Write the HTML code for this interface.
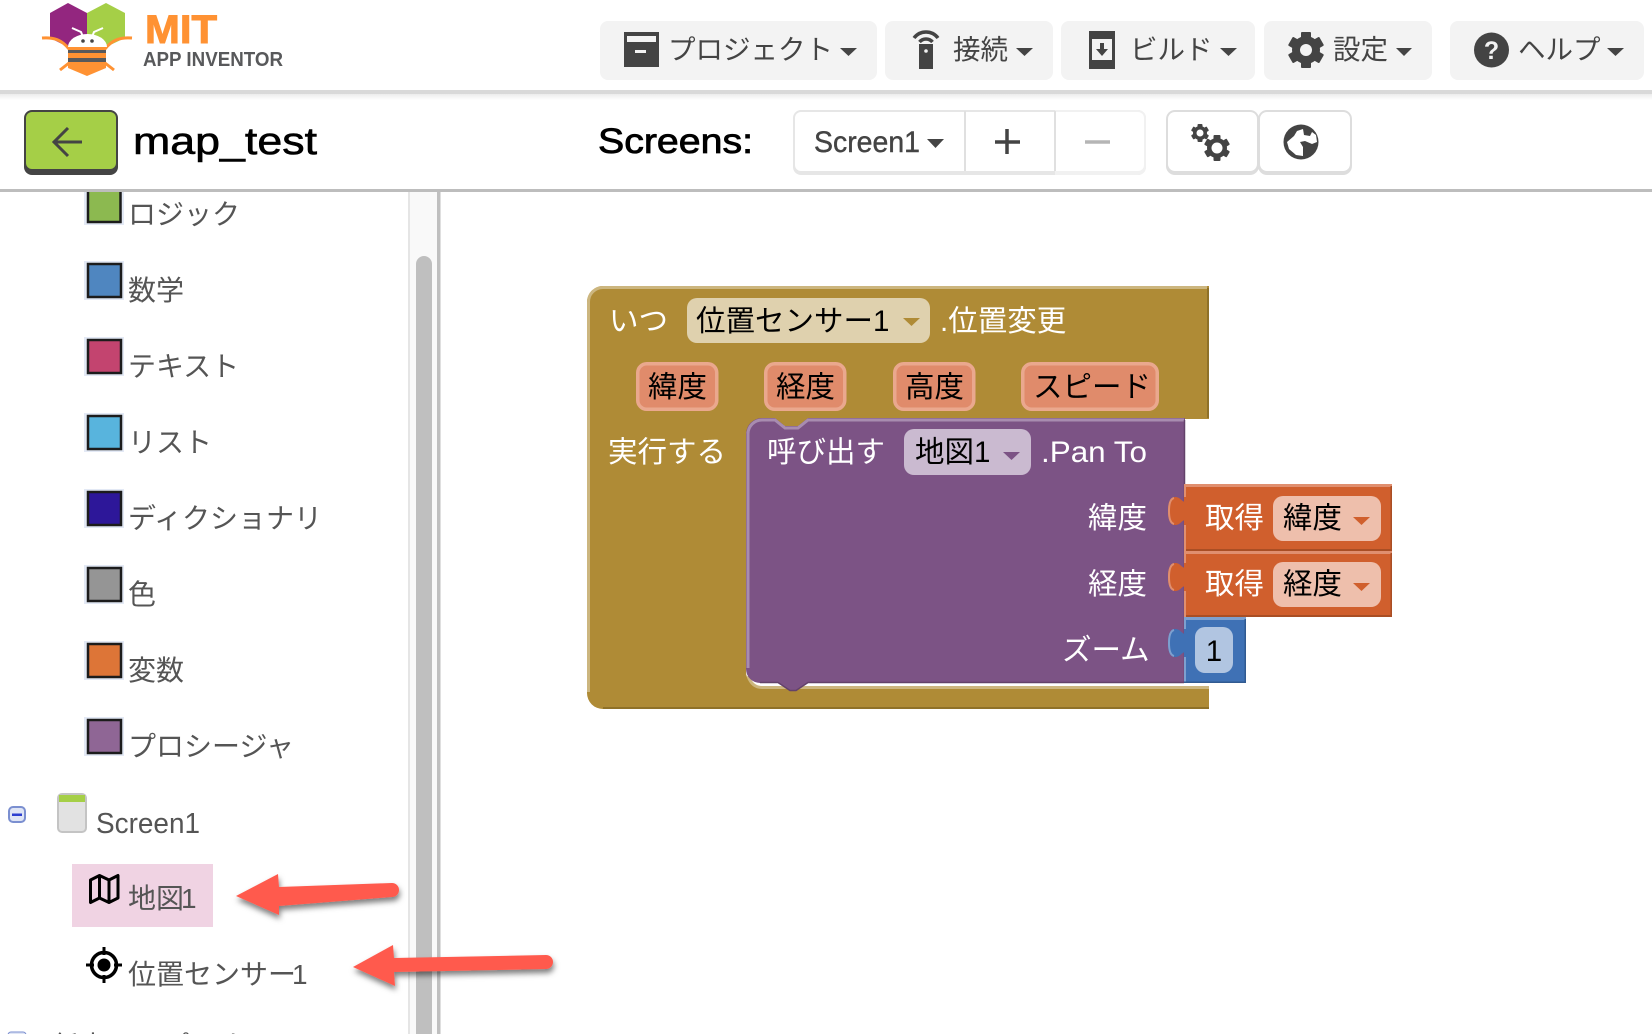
<!DOCTYPE html>
<html lang="ja">
<head>
<meta charset="utf-8">
<title>MIT App Inventor</title>
<style>
html,body{margin:0;padding:0;background:#fff;width:1652px;height:1034px;overflow:hidden}
svg{display:block;font-family:"Liberation Sans","Noto Sans CJK JP",sans-serif}
.m{font-size:27.5px;fill:#444}
.s{font-size:28px;fill:#555}
.w{font-size:29.5px;fill:#fff}
.k{font-size:29.5px;fill:#000}
</style>
</head>
<body>
<svg width="1652" height="1034" viewBox="0 0 1652 1034" xmlns="http://www.w3.org/2000/svg">
<defs>
<linearGradient id="fade" x1="0" y1="0" x2="0" y2="1"><stop offset="0" stop-color="#ececec"/><stop offset="1" stop-color="#fff"/></linearGradient>
<filter id="sh" x="-20%" y="-40%" width="140%" height="190%"><feDropShadow dx="1" dy="4" stdDeviation="3" flood-color="#000" flood-opacity=".5"/></filter>
<g id="tab"><path d="M18 5C13 5 13 0 7 0C2 0 0 6 0 14C0 22 2 28 7 28C13 28 13 23 18 23Z"/></g>
</defs>

<!-- header -->
<rect x="0" y="90" width="1652" height="4" fill="#d9d9d9"/>
<rect x="0" y="94" width="1652" height="6" fill="url(#fade)"/>

<!-- logo -->
<path d="M50 13L68 3L87 13V47H68L50 38Z" fill="#93267f"/>
<path d="M87 13L106 3L125 13V38L106 47H87Z" fill="#a5cf47"/>
<path d="M42 38C54 37 62 40 69 49" fill="none" stroke="#ff9233" stroke-width="3"/>
<path d="M132 38C120 37 112 40 105 49" fill="none" stroke="#ff9233" stroke-width="3"/>
<path d="M72 28L81 32L83 37M103 28L94 32L92 37" fill="none" stroke="#fff" stroke-width="2"/>
<path d="M68 47A19.500 13 0 0 1 107 47Z" fill="#fff"/>
<circle cx="83" cy="41" r="1.800" fill="#444"/><circle cx="92" cy="41" r="1.800" fill="#444"/>
<rect x="68" y="47" width="38" height="3.500" fill="#ff9233"/>
<rect x="68" y="50" width="38" height="3" fill="#58595b"/>
<rect x="68" y="53" width="38" height="5" fill="#ff9233"/>
<rect x="68" y="58" width="38" height="4" fill="#58595b"/>
<path d="M68 62H106V68L87 76L68 68Z" fill="#ff9233"/>
<path d="M69 63L60 70M105 63L114 70" stroke="#ff9233" stroke-width="3"/>
<text x="145" y="43" font-size="40" font-weight="700" fill="#ff9233" stroke="#ff9233" stroke-width="1" textLength="72" lengthAdjust="spacingAndGlyphs">MIT</text>
<text x="143" y="66" font-size="20" font-weight="700" fill="#58595b" textLength="140" lengthAdjust="spacingAndGlyphs">APP INVENTOR</text>

<!-- menu buttons -->
<g fill="#f3f3f3">
<rect x="600" y="21" width="277" height="59" rx="8"/>
<rect x="885" y="21" width="168" height="59" rx="8"/>
<rect x="1061" y="21" width="194" height="59" rx="8"/>
<rect x="1264" y="21" width="168" height="59" rx="8"/>
<rect x="1450" y="21" width="194" height="59" rx="8"/>
</g>
<!-- project icon -->
<rect x="624" y="32" width="35" height="35" fill="#444"/>
<rect x="627" y="36" width="29" height="6" fill="#f3f3f3"/>
<rect x="635" y="50" width="11" height="3" fill="#f3f3f3"/>
<text class="m" x="668" y="59">プロジェクト</text>
<path d="M840 48H857L848.500 56Z" fill="#444"/>
<!-- connect icon -->
<path d="M914 38A15 15 0 0 1 938 38" fill="none" stroke="#444" stroke-width="3.500"/>
<path d="M919.500 42A8.500 8.500 0 0 1 932.500 42" fill="none" stroke="#444" stroke-width="3.500"/>
<rect x="919" y="44" width="14" height="25" fill="#444"/>
<circle cx="926" cy="51" r="1.800" fill="#f3f3f3"/>
<text class="m" x="953" y="59">接続</text>
<path d="M1016 48H1033L1024.500 56Z" fill="#444"/>
<!-- build icon -->
<rect x="1089" y="31" width="26" height="38" fill="#444"/>
<rect x="1092" y="39" width="20" height="21" fill="#f3f3f3"/>
<path d="M1100 43H1104V49H1108L1102 56L1096 49H1100Z" fill="#444"/>
<text class="m" x="1130" y="59">ビルド</text>
<path d="M1220 48H1237L1228.500 56Z" fill="#444"/>
<!-- settings gear -->
<g transform="translate(1306 50)" fill="#444">
<circle r="14"/>
<rect x="-5" y="-18" width="10" height="36" rx="1"/>
<rect x="-5" y="-18" width="10" height="36" rx="1" transform="rotate(60)"/>
<rect x="-5" y="-18" width="10" height="36" rx="1" transform="rotate(120)"/>
<circle r="6" fill="#f3f3f3"/>
</g>
<text class="m" x="1333" y="59">設定</text>
<path d="M1396 48H1412L1404 56Z" fill="#444"/>
<!-- help -->
<circle cx="1491.500" cy="50" r="17.500" fill="#444"/>
<text x="1491.500" y="59" font-size="25" font-weight="700" fill="#f3f3f3" text-anchor="middle">?</text>
<text class="m" x="1518" y="59">ヘルプ</text>
<path d="M1607 48H1624L1615.500 56Z" fill="#444"/>

<!-- second bar -->
<rect x="24" y="110" width="94" height="65" rx="8" fill="#444"/>
<rect x="26" y="112" width="90" height="57" rx="6" fill="#a5cf47"/>
<path d="M82 142H54M68 128L54 142L68 156" fill="none" stroke="#444" stroke-width="3"/>
<text x="133" y="154" font-size="38" fill="#000" textLength="184" lengthAdjust="spacingAndGlyphs" style="stroke:#000;stroke-width:.6px">map_test</text>
<text x="598" y="153" font-size="35" fill="#000" textLength="155" lengthAdjust="spacingAndGlyphs" style="stroke:#000;stroke-width:.8px">Screens:</text>

<!-- screens group -->
<rect x="793" y="110" width="353" height="65" rx="8" fill="#e6e6e6"/>
<path d="M1055 110H1138a8 8 0 0 1 8 8V167a8 8 0 0 1-8 8H1055Z" fill="#f1f1f1"/>
<rect x="795" y="112" width="349" height="59" rx="6" fill="#fff"/>
<rect x="964" y="111" width="2" height="60" fill="#e0e0e0"/>
<rect x="1054" y="111" width="2" height="60" fill="#e0e0e0"/>
<text x="814" y="152" font-size="30" fill="#444" stroke="#444" stroke-width=".4" textLength="106" lengthAdjust="spacingAndGlyphs">Screen1</text>
<path d="M927 139H944L935.500 148Z" fill="#444"/>
<path d="M1007 129V154M995 142H1020" stroke="#444" stroke-width="3.500"/>
<path d="M1085 142H1110" stroke="#b5b5b5" stroke-width="3.500"/>

<rect x="1166" y="110" width="93" height="65" rx="9" fill="#ddd"/>
<rect x="1168" y="112" width="89" height="59" rx="7" fill="#fff"/>
<rect x="1258" y="110" width="94" height="65" rx="9" fill="#ddd"/>
<rect x="1260" y="112" width="90" height="59" rx="7" fill="#fff"/>
<g fill="#444">
<g transform="translate(1217 148)">
<circle r="10"/><rect x="-3.500" y="-13" width="7" height="26" rx="1"/><rect x="-3.500" y="-13" width="7" height="26" rx="1" transform="rotate(60)"/><rect x="-3.500" y="-13" width="7" height="26" rx="1" transform="rotate(120)"/><circle r="5.500" fill="#fff"/>
</g>
<g transform="translate(1200 133)">
<circle r="7"/><rect x="-2.500" y="-9" width="5" height="18" rx="1"/><rect x="-2.500" y="-9" width="5" height="18" rx="1" transform="rotate(60)"/><rect x="-2.500" y="-9" width="5" height="18" rx="1" transform="rotate(120)"/><circle r="3.500" fill="#fff"/>
</g>
</g>
<circle cx="1301" cy="142" r="17.500" fill="#444"/>
<path d="M1287 142L1294 136L1297 131L1303 129L1304 135L1310 136L1312 132L1316 135L1317 142L1312 144L1305 141L1300 142L1303 147L1303 156L1296 155L1289 149Z" fill="#fff"/>

<!-- divider line -->
<rect x="0" y="189" width="1652" height="3" fill="#bdbdbd"/>

<!-- sidebar scrollbar -->
<rect x="408" y="192" width="29" height="842" fill="#f9f9f9"/>
<rect x="408" y="192" width="2" height="842" fill="#e5e5e5"/>
<path d="M416 264a8 8 0 0 1 16 0V1034H416Z" fill="#bfbfbf"/>
<rect x="437" y="192" width="3.500" height="842" fill="#bfbfbf"/>

<!-- sidebar swatches -->
<g>
<rect x="84" y="192" width="40" height="33" fill="#e3e9f5"/>
<rect x="84" y="261" width="40" height="39" fill="#e3e9f5"/>
<rect x="84" y="337" width="40" height="39" fill="#e3e9f5"/>
<rect x="84" y="413" width="40" height="39" fill="#e3e9f5"/>
<rect x="84" y="489" width="40" height="39" fill="#e3e9f5"/>
<rect x="84" y="565" width="40" height="39" fill="#e3e9f5"/>
<rect x="84" y="641" width="40" height="39" fill="#e3e9f5"/>
<rect x="84" y="717" width="40" height="39" fill="#e3e9f5"/>
</g>
<g stroke="#1c1c1c" stroke-width="2.500">
<path d="M88 192V222H120.500V192" fill="#8cb950"/>
<rect x="88" y="264" width="33" height="33" fill="#4f86c0"/>
<rect x="88" y="340" width="33" height="33" fill="#c3446f"/>
<rect x="88" y="416" width="33" height="33" fill="#58b4dd"/>
<rect x="88" y="492" width="33" height="33" fill="#2d1799"/>
<rect x="88" y="568" width="33" height="33" fill="#959595"/>
<rect x="88" y="644" width="33" height="33" fill="#dd7537"/>
<rect x="88" y="720" width="33" height="33" fill="#8f6695"/>
</g>
<text class="s" x="128" y="224">ロジック</text>
<text class="s" x="128" y="300">数学</text>
<text class="s" x="128" y="376">テキスト</text>
<text class="s" x="128" y="452">リスト</text>
<text class="s" x="128" y="528">ディクショナリ</text>
<text class="s" x="128" y="604">色</text>
<text class="s" x="128" y="680">変数</text>
<text class="s" x="128" y="756">プロシージャ</text>

<!-- screen1 tree -->
<rect x="9" y="807" width="16" height="15" rx="4" fill="#dfe5f5" stroke="#7b8fd0" stroke-width="2"/>
<rect x="12" y="813.500" width="10" height="2.500" fill="#2d3fd0"/>
<rect x="58" y="794" width="28" height="38" rx="4" fill="#e2e2e2" stroke="#c4c4c4" stroke-width="2"/>
<rect x="59" y="795" width="26" height="7" fill="#a5cf47"/>
<text x="96" y="833" font-size="29" fill="#555" textLength="104" lengthAdjust="spacingAndGlyphs">Screen1</text>

<rect x="72" y="864" width="141" height="63" fill="#f0d3e3"/>
<path d="M90.500 880L99.500 875.500L109 880L118 875.500V898L109 902.500L99.500 898L90.500 902.500Z" fill="none" stroke="#000" stroke-width="3" stroke-linejoin="round"/>
<path d="M99.500 876V898M109 880V902" stroke="#000" stroke-width="3"/>
<text class="s" x="128" y="908">地図<tspan dx="-3">1</tspan></text>

<circle cx="104" cy="965" r="12.500" fill="none" stroke="#000" stroke-width="3.500"/>
<circle cx="104" cy="965" r="6.500" fill="#000"/>
<path d="M104 947V955M104 975V983M86 965H94M114 965H122" stroke="#000" stroke-width="3"/>
<text class="s" x="128" y="984">位置センサー<tspan dx="-4">1</tspan></text>

<rect x="8" y="1032" width="18" height="6" rx="3" fill="#dfe5f5" stroke="#7b8fd0" stroke-width="1"/>
<text class="s" x="51" y="1056">任意コンポーネント</text>

<!-- arrows -->
<path d="M236 896L278 874L279 887L392 883A7 7 0 0 1 392 897L279 906L279 915Z" fill="#ff5a4d" filter="url(#sh)"/>
<path d="M353 967L393 945L394 958L546 955A7 7 0 0 1 546 969L394 972L395 986Z" fill="#ff5a4d" filter="url(#sh)"/>

<!-- brown block -->
<path d="M587 302a16 16 0 0 1 16-16H1209V419H808L798 426H785L775 419H762a16 16 0 0 0-16 16V672a14 14 0 0 0 14 14H1209V709H603a16 16 0 0 1-16-16Z" fill="#af8b36"/>
<path d="M588.500 692V302a14.500 14.500 0 0 1 14.500-14.500H1207" fill="none" stroke="#ccb67f" stroke-width="3"/>
<path d="M748 676Q752 687.500 762 687.500H1209" fill="none" stroke="#ccb67f" stroke-width="3"/>
<path d="M603 708H1209M1208 288V418" stroke="#8f7128" stroke-width="2"/>
<text class="w" x="609" y="331">いつ</text>
<rect x="687" y="298" width="243" height="45" rx="10" fill="#dfd1ae"/>
<text class="k" x="696" y="331">位置センサー1</text>
<path d="M903 318H920L911.500 326Z" fill="#af8b36"/>
<text class="w" x="940" y="331">.位置変更</text>

<g fill="#e08b6b" stroke="#eaa88e" stroke-width="3.500">
<rect x="637.750" y="363.750" width="79" height="45.500" rx="9"/>
<rect x="765.750" y="363.750" width="79" height="45.500" rx="9"/>
<rect x="894.750" y="363.750" width="79" height="45.500" rx="9"/>
<rect x="1022.750" y="363.750" width="134.500" height="45.500" rx="9"/>
</g>
<text class="k" x="648" y="397">緯度</text>
<text class="k" x="776" y="397">経度</text>
<text class="k" x="905" y="397">高度</text>
<text class="k" x="1033" y="397">スピード</text>
<text class="w" x="608" y="462">実行する</text>

<!-- purple block -->
<path d="M746 434a16 16 0 0 1 16-16H775L785 426H798L808 418H1185V683H808L796 691H790L778 683H760a14 14 0 0 1-14-14Z" fill="#7c5385"/>
<path d="M748 668V434a14 14 0 0 1 14-14H775L785 428H798L808 420H1184" fill="none" stroke="#a88cb0" stroke-width="3"/>
<path d="M760 682.500H778L790 690.500H796L808 682.500H1184M1184.500 420V683" fill="none" stroke="#63426a" stroke-width="1.500"/>
<text class="w" x="767" y="462">呼び出す</text>
<rect x="904" y="429" width="127" height="46" rx="10" fill="#cabad0"/>
<text class="k" x="915" y="462">地図1</text>
<path d="M1003 452H1020L1011.500 460Z" fill="#7c5385"/>
<text x="1041" y="462" font-size="30" fill="#fff" textLength="106" lengthAdjust="spacingAndGlyphs">.Pan To</text>
<text class="w" x="1088" y="528">緯度</text>
<text class="w" x="1088" y="594">経度</text>
<text class="w" x="1062" y="660">ズーム</text>

<!-- orange blocks -->
<rect x="1184" y="484" width="208" height="67" fill="#d05f2d"/>
<rect x="1184" y="484" width="208" height="3" fill="#e08f6f"/>
<rect x="1184" y="549" width="208" height="2" fill="#a94e24"/>
<rect x="1390.500" y="486" width="1.500" height="65" fill="#a94e24"/>
<rect x="1184" y="484" width="2" height="13" fill="#e08f6f"/>
<rect x="1184" y="525" width="2" height="26" fill="#e08f6f"/>
<use href="#tab" x="1168" y="497" fill="#d05f2d"/>
<path d="M1174 498C1170 499 1169 505 1169 511C1169 517 1170 523 1174 524" fill="none" stroke="#e08f6f" stroke-width="2"/>
<text class="w" x="1205" y="528">取得</text>
<rect x="1273" y="496" width="108" height="45" rx="10" fill="#eebfac"/>
<text class="k" x="1283" y="528">緯度</text>
<path d="M1353 517H1370L1361.500 525Z" fill="#d05f2d"/>

<rect x="1184" y="551" width="208" height="66" fill="#d05f2d"/>
<rect x="1184" y="551" width="208" height="3" fill="#e08f6f"/>
<rect x="1184" y="615" width="208" height="2" fill="#a94e24"/>
<rect x="1390.500" y="553" width="1.500" height="64" fill="#a94e24"/>
<rect x="1184" y="551" width="2" height="12" fill="#e08f6f"/>
<rect x="1184" y="591" width="2" height="26" fill="#e08f6f"/>
<use href="#tab" x="1168" y="563" fill="#d05f2d"/>
<path d="M1174 564C1170 565 1169 571 1169 577C1169 583 1170 589 1174 590" fill="none" stroke="#e08f6f" stroke-width="2"/>
<text class="w" x="1205" y="594">取得</text>
<rect x="1273" y="562" width="108" height="45" rx="10" fill="#eebfac"/>
<text class="k" x="1283" y="594">経度</text>
<path d="M1353 583H1370L1361.500 591Z" fill="#d05f2d"/>

<!-- blue block -->
<rect x="1184" y="617" width="62" height="66" fill="#3f71b5"/>
<rect x="1184" y="617" width="62" height="3" fill="#7da0cf"/>
<rect x="1184" y="617" width="2" height="12" fill="#7da0cf"/>
<rect x="1184" y="657" width="2" height="26" fill="#7da0cf"/>
<rect x="1184" y="681.500" width="62" height="1.500" fill="#315a91"/>
<rect x="1244.500" y="619" width="1.500" height="64" fill="#315a91"/>
<use href="#tab" x="1168" y="629" fill="#3f71b5"/>
<path d="M1174 630C1170 631 1169 637 1169 643C1169 649 1170 655 1174 656" fill="none" stroke="#7da0cf" stroke-width="2"/>
<rect x="1195" y="627" width="38" height="46" rx="10" fill="#b1c5e1"/>
<text class="k" x="1214" y="661" text-anchor="middle">1</text>
</svg>
</body>
</html>
